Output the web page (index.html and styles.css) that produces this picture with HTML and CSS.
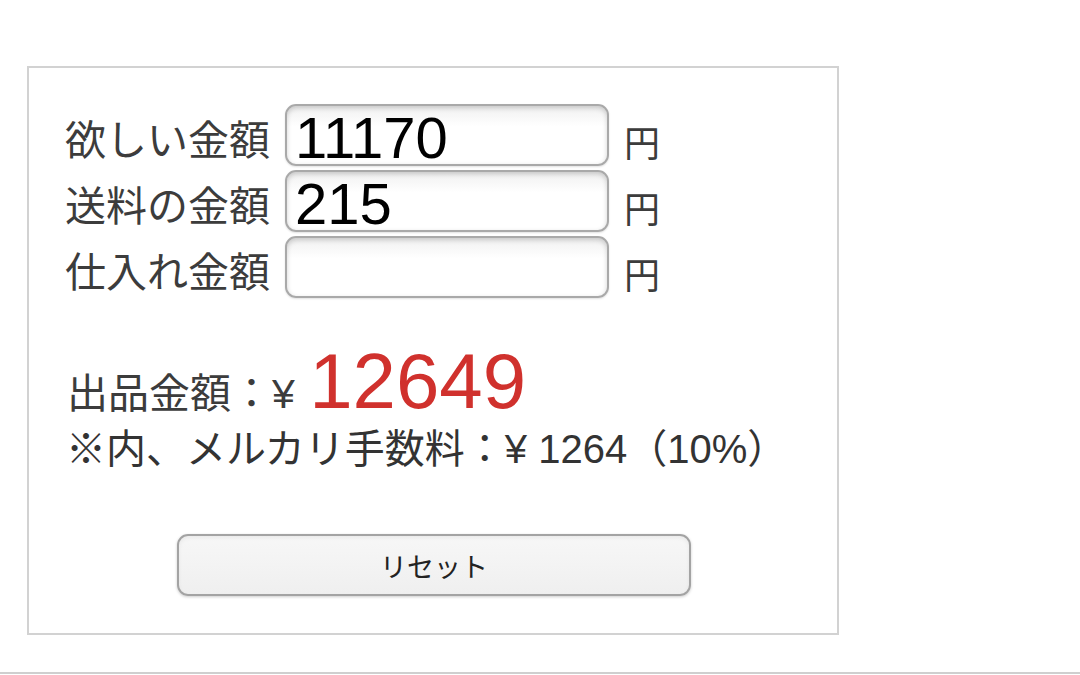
FILE: index.html
```html
<!DOCTYPE html>
<html lang="ja">
<head>
<meta charset="utf-8">
<title>メルカリ出品金額計算</title>
<link rel="stylesheet" href="styles.css">
</head>
<body>
<div class="page">
  <div class="card">
    <div class="form">
      <div class="row">
        <label class="label" for="want">欲しい金額</label>
        <input class="field" id="want" type="text" value="11170">
        <span class="unit">円</span>
      </div>
      <div class="row">
        <label class="label" for="ship">送料の金額</label>
        <input class="field" id="ship" type="text" value="215">
        <span class="unit">円</span>
      </div>
      <div class="row">
        <label class="label" for="cost">仕入れ金額</label>
        <input class="field" id="cost" type="text" value="">
        <span class="unit">円</span>
      </div>
    </div>
    <div class="result">
      <span class="result-label">出品金額：¥ </span><span class="price">12649</span>
    </div>
    <div class="fee">※内、メルカリ手数料：¥ 1264（10%）</div>
    <div class="actions">
      <button class="reset" type="button">リセット</button>
    </div>
  </div>
</div>
<div class="footer-line"></div>
</body>
</html>
```
FILE: styles.css
```css
html, body {
  margin: 0;
  padding: 0;
  background: #ffffff;
}
body {
  font-family: "Liberation Sans", "Noto Sans CJK JP", sans-serif;
  color: #3c3c3c;
}
.page {
  padding: 66px 0 0 27px;
  height: 606px;
}
.card {
  width: 808px;
  height: 565px;
  border: 2px solid #d2d2d2;
  box-sizing: content-box;
}
.form {
  padding: 36px 0 0 38px;
  display: flex;
  flex-direction: column;
  gap: 4px;
}
.row {
  display: flex;
  align-items: flex-start;
  height: 62px;
}
.label {
  width: 220px;
  font-family: "Noto Sans CJK JP", sans-serif;
  font-size: 41px;
  line-height: 62px;
  padding-top: 2px;
  margin-left: -2px;
  color: #3c3c3c;
  white-space: nowrap;
}
.field {
  box-sizing: border-box;
  width: 324px;
  height: 62px;
  margin: 0;
  padding: 4px 0 0 8px;
  border: 2px solid #a9a9a9;
  border-radius: 11px;
  background: linear-gradient(#f0f0f0, #ffffff 35%);
  box-shadow: inset 0 2px 5px rgba(0, 0, 0, 0.18), 0 1px 2px rgba(0, 0, 0, 0.12);
  font-family: "Liberation Sans", Arial, sans-serif;
  font-size: 58px;
  color: #000000;
  outline: none;
}
.unit {
  margin-left: 15px;
  padding-top: 19px;
  font-family: "Noto Sans CJK JP", sans-serif;
  font-size: 36px;
  line-height: 36px;
  color: #3c3c3c;
}
.result {
  margin: 50px 0 0 38px;
  line-height: 66px;
  white-space: nowrap;
}
.result-label {
  font-size: 41px;
  color: #3c3c3c;
}
.price {
  font-family: "Liberation Sans", Arial, sans-serif;
  font-size: 78px;
  margin-left: 3px;
  color: #d0312d;
}
.fee {
  margin: -11px 0 0 37px;
  font-size: 40px;
  line-height: 48px;
  color: #333333;
  white-space: nowrap;
}
.actions {
  padding: 61px 0 0 148px;
}
.reset {
  box-sizing: border-box;
  width: 514px;
  height: 62px;
  border: 2px solid #a3a3a3;
  border-radius: 11px;
  background: linear-gradient(#f7f7f7, #efefef);
  box-shadow: 0 1px 3px rgba(0, 0, 0, 0.2), inset 0 2px 4px rgba(0, 0, 0, 0.06);
  font-family: "Noto Sans CJK JP", sans-serif;
  font-size: 27px;
  color: #222222;
  padding: 0;
}
.footer-line {
  height: 0;
  border-top: 2px solid #cfcfcf;
}
```
